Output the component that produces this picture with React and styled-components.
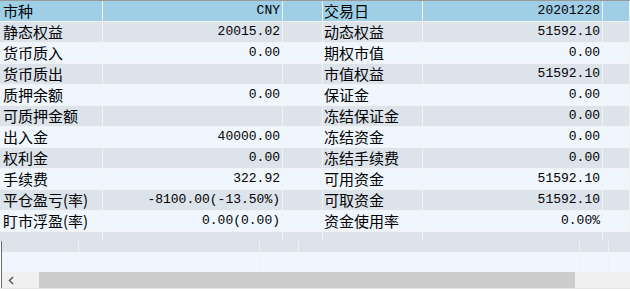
import React from "react";
import styled, { createGlobalStyle } from "styled-components";

const Global = createGlobalStyle`
  html, body { margin: 0; padding: 0; background: #ffffff; }
  #root { width: 630px; height: 291px; }
`;

const COLS = "103px 180px 40px 100px 180px 1fr";
const LOWER_COLS = "77px 181px 39px 281px 29px 1fr";

const Page = styled.div`
  width: 630px;
  height: 291px;
  overflow: hidden;
  background: #ffffff;
  border-top: 1px solid #9a9a9a;
  box-sizing: border-box;
  display: flex;
  flex-direction: column;
`;

const Row = styled.div`
  display: grid;
  grid-template-columns: ${COLS};
  height: 21px;
  box-sizing: border-box;
  border-bottom: 1px solid #f2f2f2;
  background: ${(p) =>
    p.$kind === "head" ? "#9fcee7" : p.$kind === "odd" ? "#dce3eb" : "#eff6fe"};
`;

const Cell = styled.div`
  border-right: 1px solid #f2f2f2;
  box-sizing: border-box;
  height: 20px;
  overflow: hidden;
  white-space: nowrap;
`;

const Label = styled(Cell)`
  font-family: "Noto Sans CJK SC", "Noto Sans", sans-serif;
  font-size: 15px;
  line-height: 20px;
  color: #000;
  padding-left: ${(p) => p.$pad}px;
`;

const Value = styled(Cell)`
  font-family: "Liberation Mono", "DejaVu Sans Mono", monospace;
  font-size: 13px;
  line-height: 20px;
  color: #000;
  text-align: right;
  padding-right: 2px;
`;

const FillerTop = styled.div`
  display: grid;
  grid-template-columns: ${COLS};
  height: 9px;
  background: #dce3eb;
`;

const FillerCell = styled.div`
  border-right: 1px solid #f2f2f2;
`;

const Lower = styled.div`
  margin-left: 1px;
  border-left: 1px solid #6b6b6b;
  display: flex;
  flex-direction: column;
`;

const LowerGrid = styled.div`
  display: grid;
  grid-template-columns: ${LOWER_COLS};
  height: 31px;
  background: linear-gradient(
    to bottom,
    #dce3eb 0px,
    #dce3eb 11px,
    #f2f2f2 11px,
    #f2f2f2 12px,
    #eff6fe 12px
  );
`;

const LowerCell = styled.div`
  border-right: 1px solid #f2f2f2;
`;

const Scrollbar = styled.div`
  display: flex;
  height: 16px;
  background: #f0f0f0;
`;

const ScrollButton = styled.div`
  width: 17px;
  display: flex;
  align-items: center;
  justify-content: center;
`;

const Track = styled.div`
  flex: 1;
  display: flex;
  align-items: stretch;
  padding-top: 0;
`;

const Thumb = styled.div`
  margin-left: 20px;
  width: 536px;
  background: #cdcdcd;
`;

const BottomEdge = styled.div`
  height: 1px;
  background: #e6e6e6;
`;

const left = [
  ["市种", "CNY"],
  ["静态权益", "20015.02"],
  ["货币质入", "0.00"],
  ["货币质出", ""],
  ["质押余额", "0.00"],
  ["可质押金额", ""],
  ["出入金", "40000.00"],
  ["权利金", "0.00"],
  ["手续费", "322.92"],
  ["平仓盈亏(率)", "-8100.00(-13.50%)"],
  ["盯市浮盈(率)", "0.00(0.00)"],
];

const right = [
  ["交易日", "20201228"],
  ["动态权益", "51592.10"],
  ["期权市值", "0.00"],
  ["市值权益", "51592.10"],
  ["保证金", "0.00"],
  ["冻结保证金", "0.00"],
  ["冻结资金", "0.00"],
  ["冻结手续费", "0.00"],
  ["可用资金", "51592.10"],
  ["可取资金", "51592.10"],
  ["资金使用率", "0.00%"],
];

export default function App() {
  return (
    <>
      <Global />
      <Page>
        {left.map((l, i) => {
          const r = right[i];
          const kind = i === 0 ? "head" : i % 2 === 1 ? "odd" : "even";
          return (
            <Row key={i} $kind={kind}>
              <Label $pad={3}>{l[0]}</Label>
              <Value>{l[1]}</Value>
              <Cell />
              <Label $pad={1}>{r[0]}</Label>
              <Value>{r[1]}</Value>
              <Cell />
            </Row>
          );
        })}
        <FillerTop>
          <FillerCell />
          <FillerCell />
          <FillerCell />
          <FillerCell />
          <FillerCell />
          <div />
        </FillerTop>
        <Lower>
          <LowerGrid>
            <LowerCell />
            <LowerCell />
            <LowerCell />
            <LowerCell />
            <LowerCell />
            <div />
          </LowerGrid>
          <Scrollbar>
            <ScrollButton>
              <svg width="6" height="9" viewBox="0 0 6 9">
                <path d="M5 1 L1.5 4.5 L5 8" fill="none" stroke="#606060" strokeWidth="1.6" />
              </svg>
            </ScrollButton>
            <Track>
              <Thumb />
            </Track>
          </Scrollbar>
        </Lower>
        <BottomEdge />
      </Page>
    </>
  );
}
